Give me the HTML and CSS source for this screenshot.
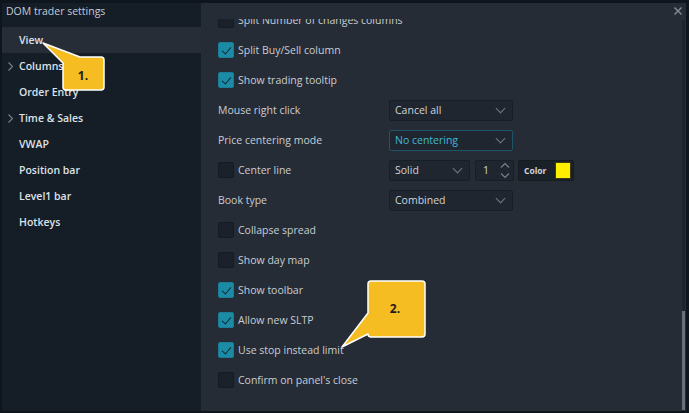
FILE: index.html
```html
<!DOCTYPE html>
<html lang="en">
  <head>
    <meta charset="UTF-8" />
    <title>DOM trader settings</title>
    <link rel="stylesheet" href="styles.css">
  </head>
  <body>
    <div class="screen">
      <div class="dialog">
        <aside class="sidebar">
          <div class="sidebar-title">DOM trader settings</div>
          <div class="nav-item active"><span class="nav-arrow"></span>View</div>
          <div class="nav-item">
            <span class="nav-arrow">
              <svg width="5" height="9" viewBox="0 0 5 9"><path d="M0.5 0.5 L4.5 4.5 L0.5 8.5" fill="none" stroke="#7b828b" stroke-width="1.1"/></svg>
            </span>Columns
          </div>
          <div class="nav-item"><span class="nav-arrow"></span>Order Entry</div>
          <div class="nav-item">
            <span class="nav-arrow">
              <svg width="5" height="9" viewBox="0 0 5 9"><path d="M0.5 0.5 L4.5 4.5 L0.5 8.5" fill="none" stroke="#7b828b" stroke-width="1.1"/></svg>
            </span>Time &amp; Sales
          </div>
          <div class="nav-item"><span class="nav-arrow"></span>VWAP</div>
          <div class="nav-item"><span class="nav-arrow"></span>Position bar</div>
          <div class="nav-item"><span class="nav-arrow"></span>Level1 bar</div>
          <div class="nav-item"><span class="nav-arrow"></span>Hotkeys</div>
        </aside>

        <section class="main">
          <div class="main-head">
            <button class="close-btn" type="button">
              <svg width="8" height="8" viewBox="0 0 8 8"><path d="M0.5 0.5 L7.5 7.5 M7.5 0.5 L0.5 7.5" stroke="#878e97" stroke-width="1.4"/></svg>
            </button>
          </div>
          <div class="main-body">
            <div class="scroll">
              <div class="list">
                <div class="row"><span class="cb"></span><span class="lbl">Split Number of changes columns</span></div>
                <div class="row"><span class="cb checked"></span><span class="lbl">Split Buy/Sell column</span></div>
                <div class="row"><span class="cb checked"></span><span class="lbl">Show trading tooltip</span></div>
                <div class="row">
                  <span class="field-label">Mouse right click</span>
                  <div class="select"><span>Cancel all</span><i class="chev"></i></div>
                </div>
                <div class="row">
                  <span class="field-label">Price centering mode</span>
                  <div class="select focus"><span>No centering</span><i class="chev"></i></div>
                </div>
                <div class="row">
                  <span class="field-label"><span class="cb"></span><span class="lbl">Center line</span></span>
                  <div class="select small"><span>Solid</span><i class="chev"></i></div>
                  <div class="number">
                    <span>1</span>
                    <span class="spin">
                      <svg width="10" height="17" viewBox="0 0 10 17"><path d="M1 5.5 L5 1.5 L9 5.5 M1 11.5 L5 15.5 L9 11.5" fill="none" stroke="#7b828b" stroke-width="1.1"/></svg>
                    </span>
                  </div>
                  <div class="color-pick"><span>Color</span><i class="swatch"></i></div>
                </div>
                <div class="row">
                  <span class="field-label">Book type</span>
                  <div class="select"><span>Combined</span><i class="chev"></i></div>
                </div>
                <div class="row"><span class="cb"></span><span class="lbl">Collapse spread</span></div>
                <div class="row"><span class="cb"></span><span class="lbl">Show day map</span></div>
                <div class="row"><span class="cb checked"></span><span class="lbl">Show toolbar</span></div>
                <div class="row"><span class="cb checked"></span><span class="lbl">Allow new SLTP</span></div>
                <div class="row"><span class="cb checked"></span><span class="lbl">Use stop instead limit</span></div>
                <div class="row"><span class="cb"></span><span class="lbl">Confirm on panel's close</span></div>
              </div>
            </div>
            <div class="scrollbar"><div class="thumb"></div></div>
          </div>
        </section>
      </div>
      <div class="chart-edge"></div>
    </div>

    <svg class="callouts" width="689" height="413" viewBox="0 0 689 413">
      <path d="M43 43 L80 57 H101 Q104 57 104 60 V87 Q104 90 101 90 H66 Q63 90 63 87 V63 Z"
        fill="#f5bd22" stroke="#ffffff" stroke-width="1.5" stroke-linejoin="round"/>
      <text x="83" y="80" text-anchor="middle" class="callout-text">1.</text>
      <path d="M342 347 L368 313 V284 Q368 281 371 281 H422 Q425 281 425 284 V334 Q425 337 422 337 H371 Q368 337 368 334 Z"
        fill="#f5bd22" stroke="#ffffff" stroke-width="1.5" stroke-linejoin="round"/>
      <text x="395" y="313" text-anchor="middle" class="callout-text">2.</text>
    </svg>
  </body>
</html>
```

FILE: styles.css
```css
/* Reset */
* {
  margin: 0;
  padding: 0;
  box-sizing: border-box;
}
body {
  font-family: "Open Sans", "Noto Sans", Arial, sans-serif;
  font-size: 10.5px;
  font-weight: 500;
  background: #0f151c;
  width: 689px;
  height: 413px;
  overflow: hidden;
  position: relative;
}
.screen {
  display: flex;
  height: 413px;
  padding: 3px 0 2px 2px;
}
.dialog {
  flex: 1;
  display: flex;
}
.chart-edge {
  width: 3px;
  background: #10161d;
}

/* Sidebar */
.sidebar {
  width: 199px;
  background: #151d27;
  display: flex;
  flex-direction: column;
}
.sidebar-title {
  height: 24px;
  padding: 1px 0 0 4px;
  color: #c6cbd1;
  font-size: 10.5px;
}
.nav-item {
  height: 26px;
  display: flex;
  align-items: center;
  color: #dde2e8;
  font-weight: 600;
}
.nav-item.active {
  background: #262d37;
}
.nav-arrow {
  width: 17px;
  padding-left: 6px;
  display: flex;
  align-items: center;
}

/* Main panel */
.main {
  flex: 1;
  background: #252c36;
  display: flex;
  flex-direction: column;
  min-width: 0;
}
.main-head {
  height: 16px;
  display: flex;
  justify-content: flex-end;
  padding: 4px 4px 0 0;
}
.close-btn {
  background: none;
  border: none;
  width: 8px;
  height: 8px;
  display: flex;
  cursor: pointer;
}
.main-body {
  flex: 1;
  display: flex;
  min-height: 0;
}
.scroll {
  flex: 1;
  overflow: hidden;
}
.list {
  margin-top: -14px;
  padding-left: 17px;
}
.scrollbar {
  width: 3px;
  margin: 1px 1px 1px 0;
  background: #1e242c;
  display: flex;
  flex-direction: column;
  justify-content: flex-end;
}
.thumb {
  height: 99px;
  background: #6a7078;
}

/* Rows */
.row {
  height: 30px;
  display: flex;
  align-items: center;
  color: #c9cdd3;
}
.cb {
  width: 16px;
  height: 16px;
  flex: none;
  background: #1a212a;
  border: 1px solid #151b23;
  border-radius: 2px;
  margin-right: 4px;
  position: relative;
}
.cb.checked {
  background: #1c8ca6;
  border-color: #1a7d95;
}
.cb.checked::after {
  content: "";
  position: absolute;
  left: 4.5px;
  top: 1.5px;
  width: 4px;
  height: 8px;
  border: solid #0f2b36;
  border-width: 0 1.6px 1.6px 0;
  transform: rotate(40deg);
}
.field-label {
  width: 171px;
  flex: none;
  display: flex;
  align-items: center;
}

.select {
  width: 124px;
  height: 21px;
  display: flex;
  align-items: center;
  justify-content: space-between;
  padding: 0 6px 0 5px;
  background: #1f262f;
  border: 1px solid #181e26;
  border-radius: 2px;
  color: #d0d4d9;
}
.select.small {
  width: 81px;
  margin-right: 5px;
}
.select.focus {
  border-color: #1c5566;
  color: #43b7d4;
}
.chev {
  width: 7px;
  height: 7px;
  border: solid #727982;
  border-width: 0 1.1px 1.1px 0;
  transform: rotate(45deg);
  margin-top: -4px;
  margin-right: 2px;
}
.number {
  width: 39px;
  height: 21px;
  display: flex;
  align-items: center;
  justify-content: space-between;
  padding: 0 3px 0 7px;
  background: #1f262f;
  border: 1px solid #181e26;
  border-radius: 2px;
  color: #d0d4d9;
  margin-right: 4px;
}
.spin {
  display: flex;
}
.color-pick {
  width: 56px;
  height: 21px;
  display: flex;
  align-items: center;
  justify-content: space-between;
  padding: 0 2px 0 5px;
  background: #1a2028;
  border: 1px solid #161b22;
  border-radius: 2px;
  color: #d0d4d9;
  font-size: 8.5px;
  font-weight: 700;
}
.swatch {
  width: 16px;
  height: 17px;
  background: #ffee00;
  border: 1px solid #3b3a10;
}

/* Callout annotations */
.callouts {
  position: absolute;
  top: 0;
  left: 0;
  pointer-events: none;
}
.callout-text {
  font-family: "Open Sans", Arial, sans-serif;
  font-size: 12px;
  font-weight: 700;
  fill: #1b1b1b;
}
```
